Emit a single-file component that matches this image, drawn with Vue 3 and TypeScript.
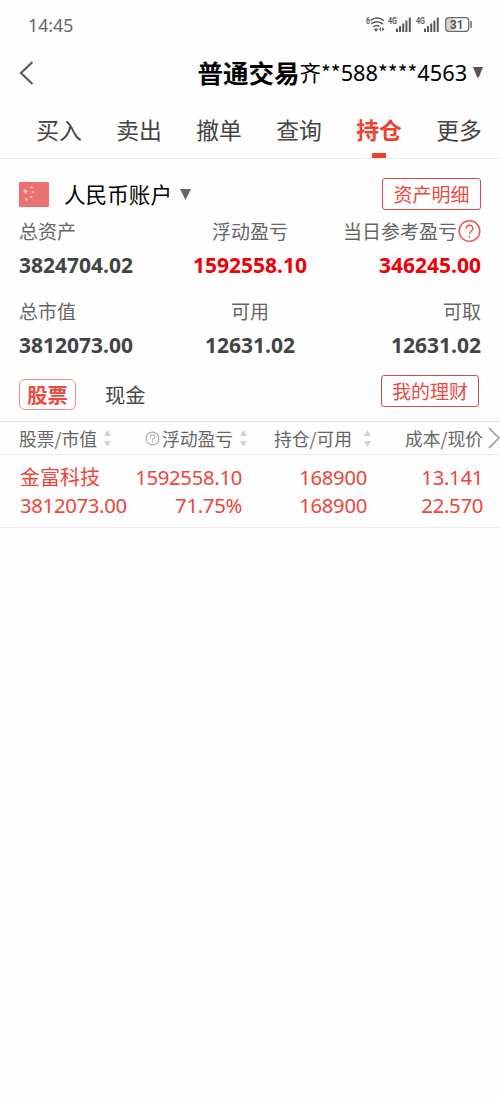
<script setup lang="ts">
interface Metric { label: string; value: string; rise?: boolean; help?: boolean }
interface Column { key: string; title: string; help?: boolean; sortable: boolean; values: string[] }

const tabs: string[] = ['买入', '卖出', '撤单', '查询', '持仓', '更多']
const activeTab = '持仓'
const metrics: Metric[] = [
  { label: '总资产', value: '3824704.02' },
  { label: '浮动盈亏', value: '1592558.10', rise: true },
  { label: '当日参考盈亏', value: '346245.00', rise: true, help: true },
  { label: '总市值', value: '3812073.00' },
  { label: '可用', value: '12631.02' },
  { label: '可取', value: '12631.02' },
]
const columns: Column[] = [
  { key: 'stock', title: '股票/市值', sortable: true, values: ['金富科技', '3812073.00'] },
  { key: 'profit', title: '浮动盈亏', help: true, sortable: true, values: ['1592558.10', '71.75%'] },
  { key: 'hold', title: '持仓/可用', sortable: true, values: ['168900', '168900'] },
  { key: 'price', title: '成本/现价', sortable: false, values: ['13.141', '22.570'] },
]
</script>

<template>
  <main class="page">
    <div class="status">
      <span class="clock">14:45</span>
      <svg class="signals" width="108" height="20" viewBox="0 0 108 20">
        <g fill="#5a5a5a" class="tiny">
          <text x="0" y="8.8" textLength="4" lengthAdjust="spacingAndGlyphs">6</text>
          <text x="22" y="8.8" textLength="9" lengthAdjust="spacingAndGlyphs">4G</text>
          <text x="50" y="8.8" textLength="9" lengthAdjust="spacingAndGlyphs">4G</text>
        </g>
        <g fill="none" stroke="#5a5a5a" stroke-width="1.6">
          <path d="M4.5 5.4C8.5 2.2 14 2.2 17.8 5.6" />
          <path d="M5.2 9C8.6 6 13.4 6 16.8 9.2" />
          <path d="M7.3 12C9.4 10.2 11.6 10.2 13.4 11.4" />
        </g>
        <path d="M8 14.4L10 13L12 14.4L10 16.8ZM13 14.2L15.1 12V16.4ZM16.2 12L18.5 14.2L16.2 16.4Z" fill="#5a5a5a" />
        <g fill="#5a5a5a">
          <path d="M30 13.5h2v3.5h-2zM33 11h2v6h-2zM36.2 8.5h2V17h-2zM39.4 5.5h2V17h-2zM42.8 2.5h2V17h-2z" />
          <path d="M58 13.5h2v3.5h-2zM61 11h2v6h-2zM64.2 8.5h2V17h-2zM67.4 5.5h2V17h-2zM70.8 2.5h2V17h-2z" />
        </g>
        <rect x="80.5" y="3.5" width="8" height="12" rx="2" fill="#d2d2d2" />
        <rect x="79.7" y="2.7" width="23" height="13.6" rx="3" fill="none" stroke="#6a6a6a" stroke-width="1.3" />
        <path d="M104.3 6h1.5v7h-1.5z" fill="#6a6a6a" />
        <text x="84" y="13.6" class="battery" textLength="13.5" lengthAdjust="spacingAndGlyphs">31</text>
      </svg>
    </div>

    <header class="header">
      <svg class="back" width="15" height="24" viewBox="0 0 15 24"><path d="M13.5 1L2 12L13.5 23" fill="none" stroke="#5c5c5c" stroke-width="2.2" /></svg>
      <h1>普通交易</h1>
      <span class="holder">齐</span>
      <span class="number"><i>**</i>588<i>****</i>4563</span>
      <svg class="caret" width="10" height="11" viewBox="0 0 10 11"><path d="M0 0H10L6 10Q5 11 4 10Z" fill="#555" /></svg>
    </header>

    <nav class="tabs">
      <span v-for="tab in tabs" :key="tab" class="tab" :class="{ active: tab === activeTab }">{{ tab }}</span>
    </nav>

    <section class="account">
      <svg width="30" height="25" viewBox="0 0 30 25">
        <rect width="30" height="25" rx="1" fill="#eb7070" />
        <path d="M6.3 6.5L7.1 8.6L9.2 8.7L7.5 10L8.1 12.1L6.3 10.9L4.5 12.1L5.1 10L3.4 8.7L5.5 8.6Z" fill="#f9c8be" />
        <g fill="#f8bfb6"><circle cx="12.3" cy="5.5" r="1.3" /><circle cx="14" cy="10" r="1.3" /><circle cx="12.2" cy="15" r="1.3" /><circle cx="7.5" cy="17.5" r="1.3" /></g>
      </svg>
      <span class="currency">人民币账户</span>
      <svg class="caret-large" width="11" height="11" viewBox="0 0 11 11"><path d="M0 0H11L5.5 11Z" fill="#666" /></svg>
      <button class="outline">资产明细</button>
    </section>

    <section class="metrics">
      <div v-for="m in metrics" :key="m.label" class="metric">
        <div class="label">
          <span>{{ m.label }}</span>
          <svg v-if="m.help" width="24" height="24" viewBox="0 0 24 24" fill="none" stroke="#ea5b52" stroke-width="1.5">
            <circle cx="12.5" cy="12" r="10.3" /><path d="M9.2 9.7C9.2 5.2 15.9 5.2 15.9 9.4C15.9 12 12.5 12 12.5 15.2M12.5 16.8V18.6" />
          </svg>
        </div>
        <strong :class="{ rise: m.rise }">{{ m.value }}</strong>
      </div>
    </section>

    <section class="kinds">
      <span class="kind selected">股票</span>
      <span class="kind">现金</span>
      <button class="outline wealth">我的理财</button>
    </section>

    <section class="table">
      <div class="line head">
        <div v-for="c in columns" :key="c.key" class="cell" :class="c.key">
          <svg v-if="c.help" class="hint" width="15" height="15" viewBox="0 0 15 15" fill="none" stroke="#aaa" stroke-width="1.1">
            <circle cx="7.5" cy="7.5" r="6.4" /><path d="M5.2 6C5.2 3 9.8 3 9.8 5.8C9.8 7.5 7.5 7.4 7.5 9.5M7.5 10.5V11.7" />
          </svg>
          <span>{{ c.title }}</span>
          <svg v-if="c.sortable" class="sort" width="7" height="17" viewBox="0 0 7 17"><path d="M3.5 0L7 6H0ZM0 11H7L3.5 17Z" fill="#d2d2d2" /></svg>
        </div>
        <svg class="next" width="12" height="22" viewBox="0 0 12 22"><path d="M1 1L11 11L1 21" fill="none" stroke="#aaa" stroke-width="1.8" /></svg>
      </div>
      <div class="line body">
        <div v-for="c in columns" :key="c.key" class="cell" :class="c.key">
          <span v-for="(v, i) in c.values" :key="i" :class="{ name: c.key === 'stock' && i === 0 }">{{ v }}</span>
        </div>
      </div>
    </section>
  </main>
</template>

<style>
body { margin: 0; background: #fefefe; }
</style>

<style scoped>
* { box-sizing: border-box; }
.page { width: 500px; height: 1099px; overflow: hidden; background: #fefefe; color: #444; font-family: "Noto Sans CJK SC", sans-serif; white-space: nowrap; }
.status { height: 50px; display: flex; align-items: center; justify-content: space-between; padding: 0 26px 0 28px; color: #666; }
.clock { font-family: "Noto Sans", sans-serif; font-size: 17.8px; line-height: 24px; }
.signals { display: block; }
.tiny { font: bold 9.5px Roboto, sans-serif; }
.battery { font: bold 12px Roboto, sans-serif; fill: #555; }
.header { height: 46px; display: flex; align-items: center; padding: 0 16px 0 19px; color: #000; }
.back { margin-right: auto; }
h1 { margin: 0 0 3px; font-size: 25.5px; font-weight: 700; line-height: 40px; }
.holder { margin-bottom: 2px; font-size: 21.5px; line-height: 32px; }
.number { width: 146px; margin-bottom: 1px; font-family: "Noto Sans", sans-serif; font-size: 21.8px; line-height: 32px; }
.number i { font-family: "Noto Sans CJK SC", sans-serif; font-style: normal; font-size: 21px; line-height: 1; }
.caret { margin: 0 1px 2px 6px; }
.tabs { height: 63px; display: flex; padding-left: 19px; border-bottom: 1px solid #e8e8e8; }
.tab { width: 80px; height: 62px; padding-top: 17px; font-size: 22.8px; line-height: 34px; text-align: center; }
.tab.active { color: #ef4034; font-weight: 700; }
.tab.active::after { content: ""; display: block; width: 14px; height: 5px; margin: 6px auto 0; background: #ef4034; }
.account { height: 56px; display: flex; align-items: center; padding: 14px 19px 0; color: #000; }
.currency { margin-left: 15px; font-size: 21.6px; line-height: 32px; }
.caret-large { margin-left: 8px; }
.outline { width: 99px; height: 32px; margin: 0 0 0 auto; padding: 0; border: 1px solid #cf4f48; border-radius: 3px; background: transparent; color: #ea4b40; font: 400 19px/28px "Noto Sans CJK SC", sans-serif; }
.metrics { display: grid; grid-template-columns: 1fr 1fr 1fr; grid-template-rows: 80px 80px; padding: 0 19px; height: 158px; }
.metric { display: flex; flex-direction: column; align-items: flex-start; padding-top: 4px; }
.metric:nth-child(3n + 2) { align-items: center; }
.metric:nth-child(3n) { align-items: flex-end; }
.label { height: 24px; display: flex; align-items: center; color: #666; font-size: 19px; line-height: 24px; }
.metric strong { margin-top: 7px; font-family: "Noto Sans", sans-serif; font-size: 21px; line-height: 30px; }
.metric strong.rise { color: #f00008; }
.kinds { height: 48px; display: flex; align-items: flex-start; padding: 2px 21px 0 19px; }
.kind { margin: 4px 0 0 29px; font-size: 20.3px; line-height: 30px; }
.kind.selected { width: 57px; height: 31px; margin-left: 0; border: 1px solid #e98d87; border-radius: 6px; color: #ea4b40; font-weight: 700; line-height: 29px; text-align: center; }
.wealth { width: 98px; }
.line { display: grid; grid-template-columns: 127px 115px 125px 133px; border-bottom: 1px solid #e9e9e9; }
.head { position: relative; height: 34px; border-top: 1px solid #e6e6e6; color: #666; font-size: 17.8px; line-height: 32px; }
.head .cell { display: flex; align-items: center; }
.head .stock { padding-left: 19px; }
.head .profit { padding-left: 18px; }
.head .hold { padding-left: 32px; }
.head .price { padding-left: 38px; }
.hint { flex: none; margin-right: 2px; }
.sort { flex: none; margin-left: 7px; }
.hold .sort { margin-left: 12px; }
.next { position: absolute; right: 0; top: 5px; }
.body { height: 73px; padding-top: 8px; color: #ef4438; font-family: "Noto Sans", "Noto Sans CJK SC", sans-serif; font-size: 20.3px; letter-spacing: -.3px; line-height: 28px; }
.body .cell { display: flex; flex-direction: column; align-items: flex-end; }
.body .stock { align-items: flex-start; padding-left: 20px; }
.body .price { padding-right: 17px; }
.body .name { font-family: "Noto Sans CJK SC", sans-serif; font-size: 20px; letter-spacing: 0; }
</style>
